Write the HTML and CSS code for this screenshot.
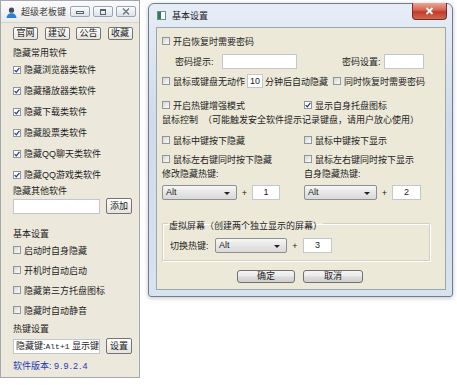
FILE: index.html
```html
<!DOCTYPE html>
<html lang="zh-CN">
<head>
<meta charset="UTF-8">
<title>超级老板键</title>
<link rel="stylesheet" href="styles.css">
</head>
<body>
<div class="desk">
	<!-- 主窗口 -->
	<div class="main-win">
		<div class="mw-title">
			<svg class="mw-icon" width="11" height="11" viewBox="0 0 11 11"><circle cx="5.5" cy="3.2" r="2.6" fill="#3b4a63"/><path d="M0.5 11C1 7.4 3 6.3 5.5 6.3S10 7.4 10.5 11Z" fill="#2f7fd0"/></svg>
			<span class="mw-name">超级老板键</span>
			<div class="mw-ctrls">
				<span class="ctl"><svg width="8" height="6" viewBox="0 0 8 6"><rect x="0.5" y="2.5" width="7" height="2" fill="none" stroke="#59606b"/></svg></span>
				<span class="ctl"><svg width="8" height="6" viewBox="0 0 8 6"><rect x="1.5" y="0.5" width="5" height="5" fill="none" stroke="#59606b"/><rect x="1.5" y="0.5" width="5" height="1.5" fill="#59606b"/></svg></span>
				<span class="ctl"><svg width="8" height="7" viewBox="0 0 8 7"><path d="M1 0.5L7 6.5M7 0.5L1 6.5" stroke="#6a717c" stroke-width="1.2"/></svg></span>
			</div>
		</div>
		<div class="mw-body">
			<div class="link-row">
				<button class="btn">官网</button>
				<button class="btn">建议</button>
				<button class="btn">公告</button>
				<button class="btn">收藏</button>
			</div>
			<div class="sec first">隐藏常用软件</div>
			<label class="chk row21 on"><span class="box"></span>隐藏浏览器类软件</label>
			<label class="chk row21 on"><span class="box"></span>隐藏播放器类软件</label>
			<label class="chk row21 on"><span class="box"></span>隐藏下载类软件</label>
			<label class="chk row21 on"><span class="box"></span>隐藏股票类软件</label>
			<label class="chk row21 on"><span class="box"></span>隐藏QQ聊天类软件</label>
			<label class="chk row21 on"><span class="box"></span>隐藏QQ游戏类软件</label>
			<div class="sec">隐藏其他软件</div>
			<div class="field-row add-row">
				<span class="txt wide"></span>
				<button class="btn side">添加</button>
			</div>
			<div class="sec basic">基本设置</div>
			<label class="chk row20"><span class="box"></span>启动时自身隐藏</label>
			<label class="chk row20"><span class="box"></span>开机时自动启动</label>
			<label class="chk row20"><span class="box"></span>隐藏第三方托盘图标</label>
			<label class="chk row20"><span class="box"></span>隐藏时自动静音</label>
			<div class="sec hot">热键设置</div>
			<div class="field-row hot-row">
				<span class="txt wide clip"><span class="clip-in">隐藏键:<span class="mono">Alt+1</span> 显示键:A</span></span>
				<button class="btn side">设置</button>
			</div>
			<div class="version">软件版本: <span class="ver-num">9.9.2.4</span></div>
		</div>
	</div>

	<!-- 基本设置 对话框 -->
	<div class="dlg">
		<div class="dlg-title">
			<svg class="dlg-icon" width="9" height="9" viewBox="0 0 9 9"><rect x="0.5" y="0.5" width="8" height="8" fill="#fff" stroke="#6f8f86"/><rect x="1" y="1" width="3" height="7" fill="#2d7a66"/></svg>
			<span class="dlg-name">基本设置</span>
			<span class="close-x"><svg width="9" height="8" viewBox="0 0 9 8"><path d="M1.5 1L7.5 7M7.5 1L1.5 7" stroke="#fff" stroke-width="1.8"/></svg></span>
		</div>
		<div class="client">
			<label class="chk r1"><span class="box"></span>开启恢复时需要密码</label>
			<div class="r2">
				<span class="lbl pw1">密码提示:</span><span class="txt pw-hint"></span>
				<span class="lbl pw2">密码设置:</span><span class="txt pw-set"></span>
			</div>
			<div class="r3">
				<label class="chk"><span class="box"></span>鼠标或键盘无动作</label>
				<span class="txt num mins">10</span>
				<span class="lbl">分钟后自动隐藏</span>
				<label class="chk also"><span class="box"></span>同时恢复时需要密码</label>
			</div>
			<div class="cols r4">
				<label class="chk"><span class="box"></span>开启热键增强模式</label>
				<label class="chk on"><span class="box"></span>显示自身托盘图标</label>
			</div>
			<div class="r5">鼠标控制<span class="note">（可能触发安全软件提示记录键盘，请用户放心使用）</span></div>
			<div class="cols r6">
				<label class="chk"><span class="box"></span>鼠标中键按下隐藏</label>
				<label class="chk"><span class="box"></span>鼠标中键按下显示</label>
			</div>
			<div class="cols r7">
				<label class="chk"><span class="box"></span>鼠标左右键同时按下隐藏</label>
				<label class="chk"><span class="box"></span>鼠标左右键同时按下显示</label>
			</div>
			<div class="cols r8">
				<span>修改隐藏热键:</span>
				<span>自身隐藏热键:</span>
			</div>
			<div class="cols r9">
				<div class="combo-row">
					<span class="sel s75">Alt<i class="arr"></i></span><span class="plus">+</span><span class="txt num k1">1</span>
				</div>
				<div class="combo-row">
					<span class="sel s73">Alt<i class="arr"></i></span><span class="plus">+</span><span class="txt num k2">2</span>
				</div>
			</div>
			<fieldset class="group">
				<legend>虚拟屏幕（创建两个独立显示的屏幕）</legend>
				<div class="combo-row g-row">
					<span class="lbl sw">切换热键:</span><span class="sel s72">Alt<i class="arr"></i></span><span class="plus">+</span><span class="txt num k3">3</span>
				</div>
			</fieldset>
			<div class="actions">
				<button class="wbtn ok">确定</button>
				<button class="wbtn cancel">取消</button>
			</div>
		</div>
	</div>
</div>
</body>
</html>
```

FILE: styles.css
```css
*{margin:0;padding:0;box-sizing:border-box;}
html,body{width:457px;height:385px;overflow:hidden;background:#fff;}
body{
	font-family:"Liberation Sans","Noto Sans CJK SC",sans-serif;
	font-size:9px;
	color:#1c1c1c;
}
button{font-family:inherit;font-size:9px;color:#1c1c1c;cursor:default;}
.desk{display:flex;align-items:flex-start;}

/* ---------- 主窗口 ---------- */
.main-win{
	width:140px;height:378px;
	border:1px solid #a3a8af;
	background:#ece9dc;
	display:flex;flex-direction:column;
}
.mw-title{
	height:22px;flex:none;
	display:flex;align-items:center;
	padding:0 3px 0 5px;
	background:linear-gradient(#fbfbfb,#ebebeb);
	border-bottom:1px solid #d4d4d0;
}
.mw-icon{flex:none;margin-top:1px;}
.mw-name{margin-left:4px;color:#3a3a3a;}
.mw-ctrls{margin-left:auto;display:flex;gap:3px;}
.ctl{
	width:20px;height:11px;
	display:flex;align-items:center;justify-content:center;
	border:1px solid #9aa5b4;border-radius:2px;
	background:linear-gradient(#fafbfc,#dde2e8);
}
.mw-body{padding:4px 0 0 12px;display:flex;flex-direction:column;}
.link-row{display:flex;gap:6.5px;}
.btn{
	width:25px;height:13px;
	border:1px solid #747474;border-radius:2px;
	background:linear-gradient(#ffffff,#e4e3dc);
	line-height:11px;
}
.sec{height:12px;line-height:12px;}
.sec.first{margin-top:7px;}
.sec.basic{margin-top:14px;}
.sec.hot{margin-top:3px;}

.chk{display:flex;align-items:center;white-space:nowrap;}
.box{
	width:8px;height:8px;flex:none;margin-right:3px;
	border:1px solid #8f959e;
	background:linear-gradient(135deg,#d6d6d0,#fbfbfb);
}
.chk.on .box{
	background:#fff url("data:image/svg+xml,%3Csvg xmlns='http://www.w3.org/2000/svg' width='6' height='6' viewBox='0 0 6 6'%3E%3Cpath d='M0.6 3.1L2.3 4.8L5.4 0.9' fill='none' stroke='%23273d8a' stroke-width='1.3'/%3E%3C/svg%3E") center/6px 6px no-repeat;
}
.row21{height:21px;}
.row20{height:20px;}

.field-row{display:flex;align-items:center;gap:6px;}
.add-row{margin-top:1px;height:16px;}
.hot-row{margin-top:3px;height:16px;}
.txt{
	display:block;height:15px;
	background:#fff;border:1px solid #c3c6cc;
	line-height:13px;white-space:nowrap;
}
.txt.wide{width:87px;}
.txt.clip{overflow:hidden;padding-left:2px;}
.clip-in{display:block;width:83px;overflow:hidden;}
.mono{font-family:"Liberation Mono",monospace;font-size:8px;}
.btn.side{width:26px;height:16px;line-height:14px;}
.version{margin-top:6px;height:12px;line-height:12px;color:#2238b8;}
.ver-num{letter-spacing:1px;}

/* ---------- 基本设置 对话框 ---------- */
.dlg{
	margin:3px 0 0 8px;
	width:305px;height:294px;
	border:1px solid #6c7e96;border-radius:6px 6px 3px 3px;
	background:linear-gradient(#e6edf6,#cfdbea 40%,#d8e3f0);
	padding:0 6px 6px 7px;
	box-shadow:0 1px 4px rgba(0,0,0,.25);
	display:flex;flex-direction:column;
}
.dlg-title{height:23px;flex:none;display:flex;align-items:center;}
.dlg-icon{margin-left:1px;}
.dlg-name{margin-left:6px;color:#1b1b1b;}
.close-x{
	margin-left:auto;margin-right:-1px;align-self:flex-start;margin-top:-1px;
	width:35px;height:17px;
	display:flex;align-items:center;justify-content:center;
	border:1px solid #7b2b22;border-top:none;border-radius:0 0 4px 4px;
	background:linear-gradient(#eaa796,#d5634f 45%,#c1392a 55%,#cf6a52);
}
.client{
	flex:1;
	background:#ece9d8;
	border:1px solid #9ca6b3;
	padding:6px 0 0 5px;
	display:flex;flex-direction:column;
}
.r1{height:14px;}
.r2{height:18px;margin-top:4px;display:flex;align-items:center;}
.lbl{white-space:nowrap;}
.pw1{margin-left:13px;width:47px;}
.pw-hint{width:75px;}
.pw2{margin-left:45px;width:42px;}
.pw-set{width:40px;}
.r3{height:18px;margin-top:2px;display:flex;align-items:center;}
.num{text-align:center;}
.mins{width:16px;height:14px;line-height:12px;margin:0 2px;}
.chk.also{margin-left:5px;}
.cols{display:grid;grid-template-columns:142px 1fr;align-items:center;}
.r4{height:18px;margin-top:6px;}
.r5{height:12px;line-height:12px;white-space:nowrap;}
.note{margin-left:5px;}
.r6{height:18px;margin-top:5px;}
.r7{height:18px;margin-top:1px;}
.r8{height:12px;line-height:12px;}
.r9{height:15px;margin-top:5px;}
.combo-row{display:flex;align-items:center;}
.sel{
	position:relative;
	height:15px;line-height:13px;padding-left:3px;
	border:1px solid #8d8f91;border-radius:2px;
	background:linear-gradient(#f7f7f7,#e6e6e6 50%,#d9d9d9);
}
.arr{
	position:absolute;right:6px;top:6px;
	border-left:3px solid transparent;border-right:3px solid transparent;
	border-top:3px solid #222;
}
.s75{width:75px;}
.s73{width:73px;}
.s72{width:72px;}
.plus{width:15px;text-align:center;}
.k1{width:28px;}
.k2{width:29px;}
.k3{width:29px;}

.group{
	width:268px;margin-top:14px;
	border:1px solid #d3d0c2;
	box-shadow:inset 1px 1px 0 #fff,1px 1px 0 #fff;
	padding:0 6px 7px 7px;
}
.group legend{padding:6px 1px 0;margin-left:-2px;line-height:12px;}
.g-row{height:15px;margin-top:6px;}
.sw{width:45px;}
.g-row .plus{width:16px;}

.actions{margin-top:9px;padding-left:75px;display:flex;gap:8px;}
.wbtn{
	height:13px;line-height:11px;
	border:1px solid #707070;border-radius:3px;
	background:linear-gradient(#f4f4f4,#ebebeb 45%,#dcdcdc 55%,#d0d0d0);
}
.ok{width:58px;}
.cancel{width:60px;}
```
